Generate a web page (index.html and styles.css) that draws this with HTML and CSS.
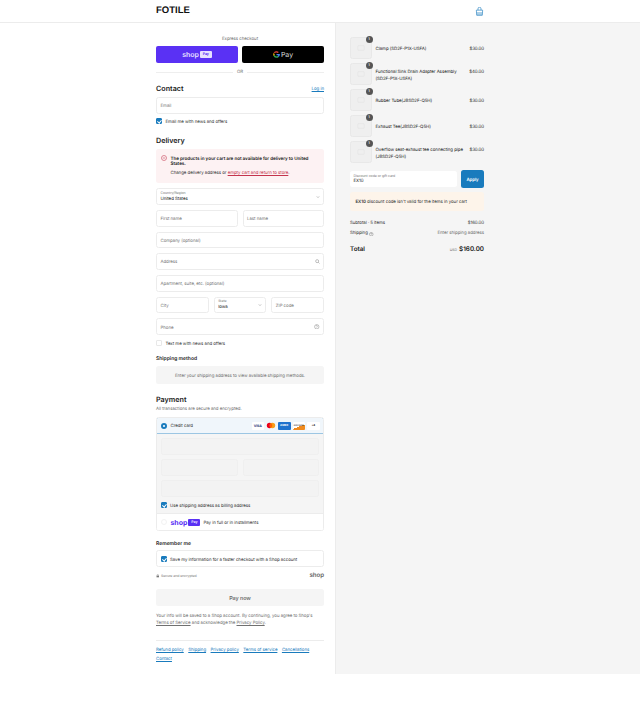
FILE: index.html
```html
<!DOCTYPE html>
<html lang="en">
<head>
    <meta charset="UTF-8">
    <meta name="viewport" content="width=device-width, initial-scale=1.0">
    <title>Checkout - FOTILE</title>
    <link rel="stylesheet" href="styles.css">
</head>
<body>

    <header class="top-bar">
        <div class="top-inner">
            <div class="logo">FOTILE</div>
            <svg class="bag" viewBox="0 0 10 10" width="9" height="9"><path d="M1.500 3.500h7l-.4 5.700H1.900zM3.300 3.500V2a1.700 1.700 0 0 1 3.400 0v1.500" fill="none" stroke="#197bbd" stroke-width=".7"/><path d="M1.800 5.500h6.400l-.2 3.600H2z" fill="#197bbd" opacity=".35"/></svg>
        </div>
    </header>

    <div class="columns">
        <main class="main-col">
            <div class="main-inner">
                <div class="express-title">Express checkout</div>
                <div class="express-row">
                    <div class="express-btn shop-btn">shop<span class="pay-tag">Pay</span></div>
                    <div class="express-btn gpay-btn">
                        <svg viewBox="0 0 24 24" width="7" height="7"><path d="M12 5a7 7 0 0 1 4.800 1.800l3-3A11.500 11.500 0 0 0 2 7z" fill="#ea4335"/><path d="M2 7a11.500 11.500 0 0 0 0 10l3.800-3a7 7 0 0 1 0-4z" fill="#fbbc05"/><path d="M2 17a11.500 11.500 0 0 0 17.800 3.300L16 17.500A7 7 0 0 1 5.800 14z" fill="#34a853"/><path d="M19.800 20.300A11.500 11.500 0 0 0 23.500 10H12v4.500h6.500a5.500 5.500 0 0 1-2.500 3z" fill="#4285f4"/></svg>
                        <span>Pay</span>
                    </div>
                </div>
                <div class="or-row"><span class="or-line"></span><span>OR</span><span class="or-line"></span></div>

                <div class="heading-row">
                    <h2>Contact</h2>
                    <a class="link">Log in</a>
                </div>
                <div class="field">Email</div>
                <label class="check-row"><span class="check on"></span>Email me with news and offers</label>

                <h2 class="delivery-title">Delivery</h2>
                <div class="alert">
                    <svg class="alert-icon" viewBox="0 0 10 10" width="6" height="6"><circle cx="5" cy="5" r="4.200" fill="none" stroke="#c4344d" stroke-width=".9"/><path d="M3 5h4" stroke="#c4344d" stroke-width=".9"/></svg>
                    <div>
                        <strong>The products in your cart are not available for delivery to United States.</strong>
                        <p>Change delivery address or <a>empty cart and return to store</a>.</p>
                    </div>
                </div>

                <div class="form-rows">
                    <div class="field select">
                        <div><small>Country/Region</small><b>United States</b></div>
                        <svg viewBox="0 0 10 10" width="4" height="4"><path d="M2 3.500l3 3 3-3" fill="none" stroke="#666" stroke-width="1"/></svg>
                    </div>
                    <div class="row">
                        <div class="field">First name</div>
                        <div class="field">Last name</div>
                    </div>
                    <div class="field">Company (optional)</div>
                    <div class="field spread">Address
                        <svg viewBox="0 0 10 10" width="5" height="5"><circle cx="4.300" cy="4.300" r="3" fill="none" stroke="#777" stroke-width=".9"/><path d="M6.500 6.500L9 9" stroke="#777" stroke-width=".9"/></svg>
                    </div>
                    <div class="field">Apartment, suite, etc. (optional)</div>
                    <div class="row">
                        <div class="field">City</div>
                        <div class="field select">
                            <div><small>State</small><b>Iowa</b></div>
                            <svg viewBox="0 0 10 10" width="4" height="4"><path d="M2 3.500l3 3 3-3" fill="none" stroke="#666" stroke-width="1"/></svg>
                        </div>
                        <div class="field">ZIP code</div>
                    </div>
                    <div class="field spread">Phone
                        <svg viewBox="0 0 10 10" width="5.500" height="5.500"><circle cx="5" cy="5" r="4" fill="none" stroke="#777" stroke-width=".8"/><path d="M3.800 4a1.200 1.200 0 1 1 1.700 1.100c-.4.200-.5.400-.5.800M5 7v.5" fill="none" stroke="#777" stroke-width=".8"/></svg>
                    </div>
                </div>
                <label class="check-row text-me"><span class="check"></span>Text me with news and offers</label>

                <h3 class="shipping-title">Shipping method</h3>
                <div class="shipping-box">Enter your shipping address to view available shipping methods.</div>

                <h2 class="payment-title">Payment</h2>
                <div class="muted-line">All transactions are secure and encrypted.</div>

                <div class="pay-box">
                    <div class="card-head">
                        <span class="radio"></span>
                        <span class="card-label">Credit card</span>
                        <div class="card-logos">
                            <span class="logo-visa">VISA</span>
                            <svg viewBox="0 0 12 8" width="10" height="7"><circle cx="4.300" cy="4" r="3.300" fill="#eb001b"/><circle cx="7.700" cy="4" r="3.300" fill="#f79e1b"/><path d="M6 1.200a3.300 3.300 0 0 1 0 5.600 3.300 3.300 0 0 1 0-5.600z" fill="#ff5f00"/></svg>
                            <span class="logo-amex">AMEX</span>
                            <span class="logo-discover">DISCOVER</span>
                            <span class="logo-more">+4</span>
                        </div>
                    </div>
                    <div class="card-panel">
                        <div class="ghost"></div>
                        <div class="row">
                            <div class="ghost"></div>
                            <div class="ghost"></div>
                        </div>
                        <div class="ghost"></div>
                        <label class="check-row billing"><span class="check on"></span>Use shipping address as billing address</label>
                    </div>
                    <div class="shop-row">
                        <span class="radio off"></span>
                        <span class="shop-word">shop</span><span class="pay-tag dark">Pay</span>
                        <span class="shop-text">Pay in full or in installments</span>
                    </div>
                </div>

                <h3 class="remember-title">Remember me</h3>
                <div class="remember-box"><span class="check on"></span>Save my information for a faster checkout with a Shop account</div>
                <div class="secure-row">
                    <span class="secure"><svg viewBox="0 0 10 10" width="3.500" height="3.500"><rect x="1.500" y="4.500" width="7" height="5" fill="#777"/><path d="M3 4.500V3a2 2 0 0 1 4 0v1.500" fill="none" stroke="#777"/></svg>Secure and encrypted</span>
                    <span class="shop-mark">shop</span>
                </div>

                <div class="pay-now">Pay now</div>
                <p class="legal">Your info will be saved to a Shop account. By continuing, you agree to Shop's <a>Terms of Service</a> and acknowledge the <a>Privacy Policy</a>.</p>

                <footer class="foot-links">
                    <a>Refund policy</a><a>Shipping</a><a>Privacy policy</a><a>Terms of service</a><a>Cancellations</a><a>Contact</a>
                </footer>
            </div>
        </main>

        <aside class="side-col">
            <div class="side-inner">
                <div class="item">
                    <div class="thumb"><span class="badge">1</span><svg viewBox="0 0 10 10" width="8" height="8"><rect x="1" y="2" width="8" height="6" rx="1" fill="none" stroke="#e2e2e2" stroke-width=".6"/></svg></div>
                    <div class="item-body">
                        <div class="item-name">Clamp (SD2F-P1X-USFA)</div>
                        <div class="item-price">$30.00</div>
                    </div>
                </div>
                <div class="item">
                    <div class="thumb"><span class="badge">1</span><svg viewBox="0 0 10 10" width="8" height="8"><rect x="1" y="2" width="8" height="6" rx="1" fill="none" stroke="#e2e2e2" stroke-width=".6"/></svg></div>
                    <div class="item-body">
                        <div class="item-name">Functional Sink Drain Adapter Assembly (SD2F-P1X-USFA)</div>
                        <div class="item-price">$40.00</div>
                    </div>
                </div>
                <div class="item">
                    <div class="thumb"><span class="badge">1</span><svg viewBox="0 0 10 10" width="8" height="8"><rect x="1" y="2" width="8" height="6" rx="1" fill="none" stroke="#e2e2e2" stroke-width=".6"/></svg></div>
                    <div class="item-body">
                        <div class="item-name">Rubber Tube(JBSD2F-Q5H)</div>
                        <div class="item-price">$30.00</div>
                    </div>
                </div>
                <div class="item">
                    <div class="thumb"><span class="badge">1</span><svg viewBox="0 0 10 10" width="8" height="8"><rect x="1" y="2" width="8" height="6" rx="1" fill="none" stroke="#e2e2e2" stroke-width=".6"/></svg></div>
                    <div class="item-body">
                        <div class="item-name">Exhaust Tee(JBSD2F-Q5H)</div>
                        <div class="item-price">$30.00</div>
                    </div>
                </div>
                <div class="item">
                    <div class="thumb"><span class="badge">1</span><svg viewBox="0 0 10 10" width="8" height="8"><rect x="1" y="2" width="8" height="6" rx="1" fill="none" stroke="#e2e2e2" stroke-width=".6"/></svg></div>
                    <div class="item-body">
                        <div class="item-name">Overflow seat-exhaust tee connecting pipe (JBSD2F-Q5H)</div>
                        <div class="item-price">$30.00</div>
                    </div>
                </div>

                <div class="discount-row">
                    <div class="field discount-field"><div><small>Discount code or gift card</small><b>EX10</b></div></div>
                    <div class="apply-btn">Apply</div>
                </div>
                <div class="discount-note"><span><strong>EX10</strong> discount code isn't valid for the items in your cart</span></div>

                <div class="sum-row first"><span>Subtotal &middot; 5 items</span><span>$160.00</span></div>
                <div class="sum-row"><span class="ship-label">Shipping
                    <svg viewBox="0 0 10 10" width="4.500" height="4.500"><circle cx="5" cy="5" r="4" fill="none" stroke="#555" stroke-width=".8"/><path d="M3.800 4a1.200 1.200 0 1 1 1.700 1.100c-.4.200-.5.400-.5.800M5 7v.5" fill="none" stroke="#555" stroke-width=".8"/></svg>
                </span><span class="muted">Enter shipping address</span></div>
                <div class="total-row"><span>Total</span><span class="total-val"><small>USD</small>$160.00</span></div>
            </div>
        </aside>
    </div>

</body>
</html>
```

FILE: styles.css
```css
* {
    box-sizing: border-box;
}

body {
    margin: 0;
    background-color: white;
    color: #1a1a1a;
    font-family: Inter, "Liberation Sans", sans-serif;
    font-size: 4.400px;
    letter-spacing: -.05px;
    line-height: 1.3;
    text-rendering: geometricPrecision;
}

h2, h3, p {
    margin: 0;
}

a {
    color: #197bbd;
    text-decoration: underline;
    text-decoration-thickness: .4px;
}

.top-bar {
    height: 23px;
    border-bottom: 1px solid #ececec;
}

.top-inner {
    width: 328px;
    margin-left: 156px;
    height: 22px;
    display: flex;
    justify-content: space-between;
    align-items: center;
}

.logo {
    font-family: "Liberation Sans", sans-serif;
    font-weight: 700;
    font-size: 9.500px;
    letter-spacing: 0;
    color: #111;
}

.columns {
    display: flex;
    height: 651px;
}

.main-col {
    width: 336px;
    border-right: 1px solid #ececec;
    padding-left: 156px;
}

.main-inner {
    width: 168px;
}

.side-col {
    flex: 1;
    background-color: #f5f5f5;
    padding: 14px 0 0 14px;
}

.side-inner {
    width: 134px;
}

.express-title {
    padding-top: 13.500px;
    text-align: center;
    color: #707070;
    height: 19px;
}

.express-row {
    display: flex;
    gap: 4px;
    margin-top: 4px;
}

.express-btn {
    flex: 1;
    height: 17px;
    border-radius: 2px;
    display: flex;
    align-items: center;
    justify-content: center;
    color: white;
}

.shop-btn {
    background-color: #5a31f4;
    font-size: 7px;
    font-weight: 600;
    color: #e6e0ff;
}

.gpay-btn {
    background-color: black;
    gap: 1px;
    font-size: 7px;
    color: #ddd;
}

.pay-tag {
    background-color: #e6e0ff;
    color: #5a31f4;
    border-radius: 1px;
    font-size: 3.500px;
    font-weight: 700;
    padding: 1px 3px;
    margin-left: 1px;
}

.pay-tag.dark {
    background-color: #5a31f4;
    color: #e6e0ff;
    margin-left: 1px;
}

.or-row {
    display: flex;
    align-items: center;
    gap: 4px;
    margin-top: 6px;
    height: 7px;
    color: #707070;
}

.or-line {
    flex: 1;
    height: 1px;
    background-color: #eee;
}

.heading-row {
    display: flex;
    justify-content: space-between;
    align-items: flex-end;
    margin-top: 8px;
}

h2 {
    font-size: 7.200px;
    font-weight: 600;
    line-height: 10px;
    letter-spacing: 0;
}

h3 {
    font-size: 5px;
    font-weight: 600;
    line-height: 7px;
    letter-spacing: 0;
}

.link {
    margin-bottom: 1px;
}

.field {
    height: 16.700px;
    border: 1px solid #ececec;
    border-radius: 2.500px;
    background-color: white;
    padding: 3.500px 3.500px 0;
    display: flex;
    align-items: center;
    color: #777;
    flex: 1;
}

.heading-row + .field {
    margin-top: 3px;
}

.spread, .select {
    justify-content: space-between;
}

.spread svg {
    margin-bottom: 3.500px;
}

.field.select, .field.discount-field {
    padding-top: 0;
}

.field small, .field b {
    display: block;
    font-weight: 400;
    line-height: 5.500px;
}

.field small {
    font-size: 3.500px;
    color: #777;
}

.field b {
    color: #1a1a1a;
    font-size: 4.400px;
}

.check-row {
    display: flex;
    align-items: center;
    gap: 3.500px;
    margin-top: 4px;
    height: 7px;
    padding-top: 4px;
    color: #333;
}

.check {
    width: 6px;
    height: 6px;
    margin-bottom: 4px;
    border: 1px solid #e8e8e8;
    border-radius: 1px;
    flex-shrink: 0;
    display: block;
    position: relative;
}

.check.on {
    background-color: #197bbd;
    border-color: #197bbd;
}

.check.on::after {
    content: "";
    position: absolute;
    left: 1.400px;
    top: .2px;
    width: 1.500px;
    height: 3px;
    border-right: .8px solid white;
    border-bottom: .8px solid white;
    transform: rotate(40deg);
}

.delivery-title {
    margin-top: 11px;
}

.alert {
    display: flex;
    gap: 3.500px;
    margin-top: 3px;
    padding: 8px 7px 0 5px;
    height: 34px;
    background-color: #fdf2f3;
    border-radius: 2.500px;
}

.alert-icon {
    flex-shrink: 0;
    margin-top: -2px;
}

.alert strong {
    font-size: 4.600px;
    font-weight: 600;
    color: #1a1a1a;
    display: block;
    line-height: 5.800px;
}

.alert p {
    margin-top: 3px;
    color: #333;
}

.alert a {
    color: #c4344d;
}

.form-rows {
    display: flex;
    flex-direction: column;
    gap: 5px;
    margin-top: 5.500px;
}

.form-rows > .field {
    flex: none;
}

.row {
    display: flex;
    gap: 5px;
}

.text-me {
    margin-top: 4.500px;
}

.shipping-title {
    margin-top: 9px;
}

.shipping-box {
    height: 18px;
    margin-top: 3.500px;
    padding-top: 3.500px;
    background-color: #f5f5f5;
    border-radius: 2.500px;
    display: flex;
    align-items: center;
    justify-content: center;
    color: #707070;
}

.payment-title {
    margin-top: 11.300px;
}

.muted-line {
    color: #707070;
    height: 7px;
    margin-top: 2px;
}

.pay-box {
    margin-top: 3px;
    border: 1px solid #ececec;
    border-radius: 2.500px;
    overflow: hidden;
}

.card-head {
    height: 17px;
    display: flex;
    align-items: center;
    padding: 0 3.500px;
    background-color: #f0f6fb;
    border: 1px solid #9cc6e3;
    margin: -1px;
    border-radius: 2.500px 2.500px 0 0;
    position: relative;
}

.radio {
    width: 6px;
    height: 6px;
    border-radius: 50%;
    border: 2px solid #197bbd;
    background-color: white;
    flex-shrink: 0;
}

.radio.off {
    border: 1px solid #f2f2f2;
}

.card-label {
    margin-left: 4px;
    margin-top: 2px;
    flex: 1;
    color: #333;
}

.card-logos {
    display: flex;
    gap: 2px;
    align-items: center;
}

.card-logos > span {
    width: 12.500px;
    height: 7.500px;
    border-radius: 1px;
    font-size: 2.800px;
    font-weight: 700;
    display: flex;
    align-items: center;
    justify-content: center;
}

.card-logos > .logo-visa {
    background-color: white;
    color: #1a3a7a;
    font-size: 3.500px;
}

.logo-amex {
    background-color: #1f72cd;
    color: white;
}

.card-logos > .logo-discover {
    background: linear-gradient(160deg, white 55%, #f08a1d 55%);
    color: #444;
    font-size: 2px;
}

.logo-more {
    background-color: white;
    color: #333;
}

.card-panel {
    background-color: #f5f5f5;
    padding: 5px 4px 0;
    height: 81px;
    display: flex;
    flex-direction: column;
    gap: 4.500px;
    border-bottom: 1px solid #ececec;
}

.ghost {
    height: 16.500px;
    flex: none;
    border: 1px solid #efefef;
    border-radius: 2.500px;
    background-color: #f3f3f3;
}

.row .ghost {
    flex: 1;
}

.billing {
    margin-top: 0;
    gap: 3px;
}

.shop-row {
    height: 16px;
    display: flex;
    align-items: center;
    padding: 0 3.500px;
    background-color: white;
}

.shop-word {
    color: #5a31f4;
    font-size: 7px;
    font-weight: 700;
    margin-left: 4px;
}

.shop-text {
    margin-left: 3px;
    margin-top: 4px;
    color: #333;
}

.remember-title {
    margin-top: 10px;
}

.remember-box {
    display: flex;
    align-items: center;
    gap: 3px;
    height: 17px;
    padding: 4px 4px 0;
    margin-top: 2px;
    border: 1px solid #ececec;
    border-radius: 2.500px;
    color: #333;
}

.secure-row {
    display: flex;
    justify-content: space-between;
    align-items: center;
    height: 10px;
    margin-top: 3.500px;
}

.secure {
    display: flex;
    align-items: center;
    gap: 1.500px;
    font-size: 3.500px;
    color: #777;
}

.shop-mark {
    font-size: 6.200px;
    font-weight: 600;
    color: #666;
}

.pay-now {
    height: 17px;
    margin-top: 8px;
    padding-top: 4px;
    background-color: #f5f5f5;
    border-radius: 2.500px;
    display: flex;
    align-items: center;
    justify-content: center;
    font-size: 5.400px;
    font-weight: 600;
    color: #707070;
}

.legal {
    margin-top: 7px;
    color: #707070;
    line-height: 7px;
}

.legal a {
    color: #707070;
}

.foot-links {
    margin-top: 13px;
    padding-top: 6.500px;
    border-top: 1px solid #ececec;
    display: flex;
    flex-wrap: wrap;
    gap: 2px 4.500px;
    line-height: 7px;
}

.item {
    display: flex;
    align-items: center;
    gap: 3.500px;
    height: 22px;
    margin-bottom: 4px;
}

.item-body {
    flex: 1;
    display: flex;
    align-items: flex-start;
    padding-top: 3px;
    color: #222;
    line-height: 7px;
}

.thumb {
    width: 22px;
    height: 22px;
    flex-shrink: 0;
    background-color: #efefef;
    border: 1px solid #e8e8e8;
    border-radius: 2.500px;
    display: flex;
    align-items: center;
    justify-content: center;
    position: relative;
}

.badge {
    position: absolute;
    top: -2.500px;
    right: -1.500px;
    width: 7px;
    height: 7px;
    border-radius: 50%;
    background-color: #555;
    color: white;
    font-size: 3.500px;
    font-weight: 600;
    display: flex;
    align-items: center;
    justify-content: center;
}

.item-name {
    flex: 1;
}

.item-price {
    width: 15px;
    text-align: right;
}

.discount-row {
    display: flex;
    gap: 4px;
    align-items: center;
    margin-top: 7px;
}

.discount-field {
    height: 16px;
    border: none;
}

.apply-btn {
    width: 23px;
    height: 18px;
    padding-top: 3.500px;
    background-color: #197bbd;
    border-radius: 2.500px;
    color: white;
    font-weight: 600;
    display: flex;
    align-items: center;
    justify-content: center;
}

.discount-note {
    margin-top: 4px;
    height: 19px;
    padding: 2px 5.500px 0;
    background-color: #fdf4ea;
    border-radius: 2.500px;
    display: flex;
    align-items: center;
    color: #333;
}

.discount-note strong {
    font-weight: 600;
}

.sum-row {
    display: flex;
    justify-content: space-between;
    align-items: center;
    height: 7px;
    margin-top: 3.500px;
    color: #333;
}

.sum-row.first {
    margin-top: 9px;
}

.ship-label {
    display: flex;
    align-items: center;
    gap: 1.500px;
}

.muted {
    color: #707070;
}

.total-row {
    display: flex;
    justify-content: space-between;
    align-items: center;
    margin-top: 7px;
    font-size: 6.300px;
    font-weight: 600;
    letter-spacing: 0;
    color: #1a1a1a;
}

.total-val small {
    font-size: 3.500px;
    font-weight: 400;
    color: #707070;
    margin-right: 2px;
}
```
